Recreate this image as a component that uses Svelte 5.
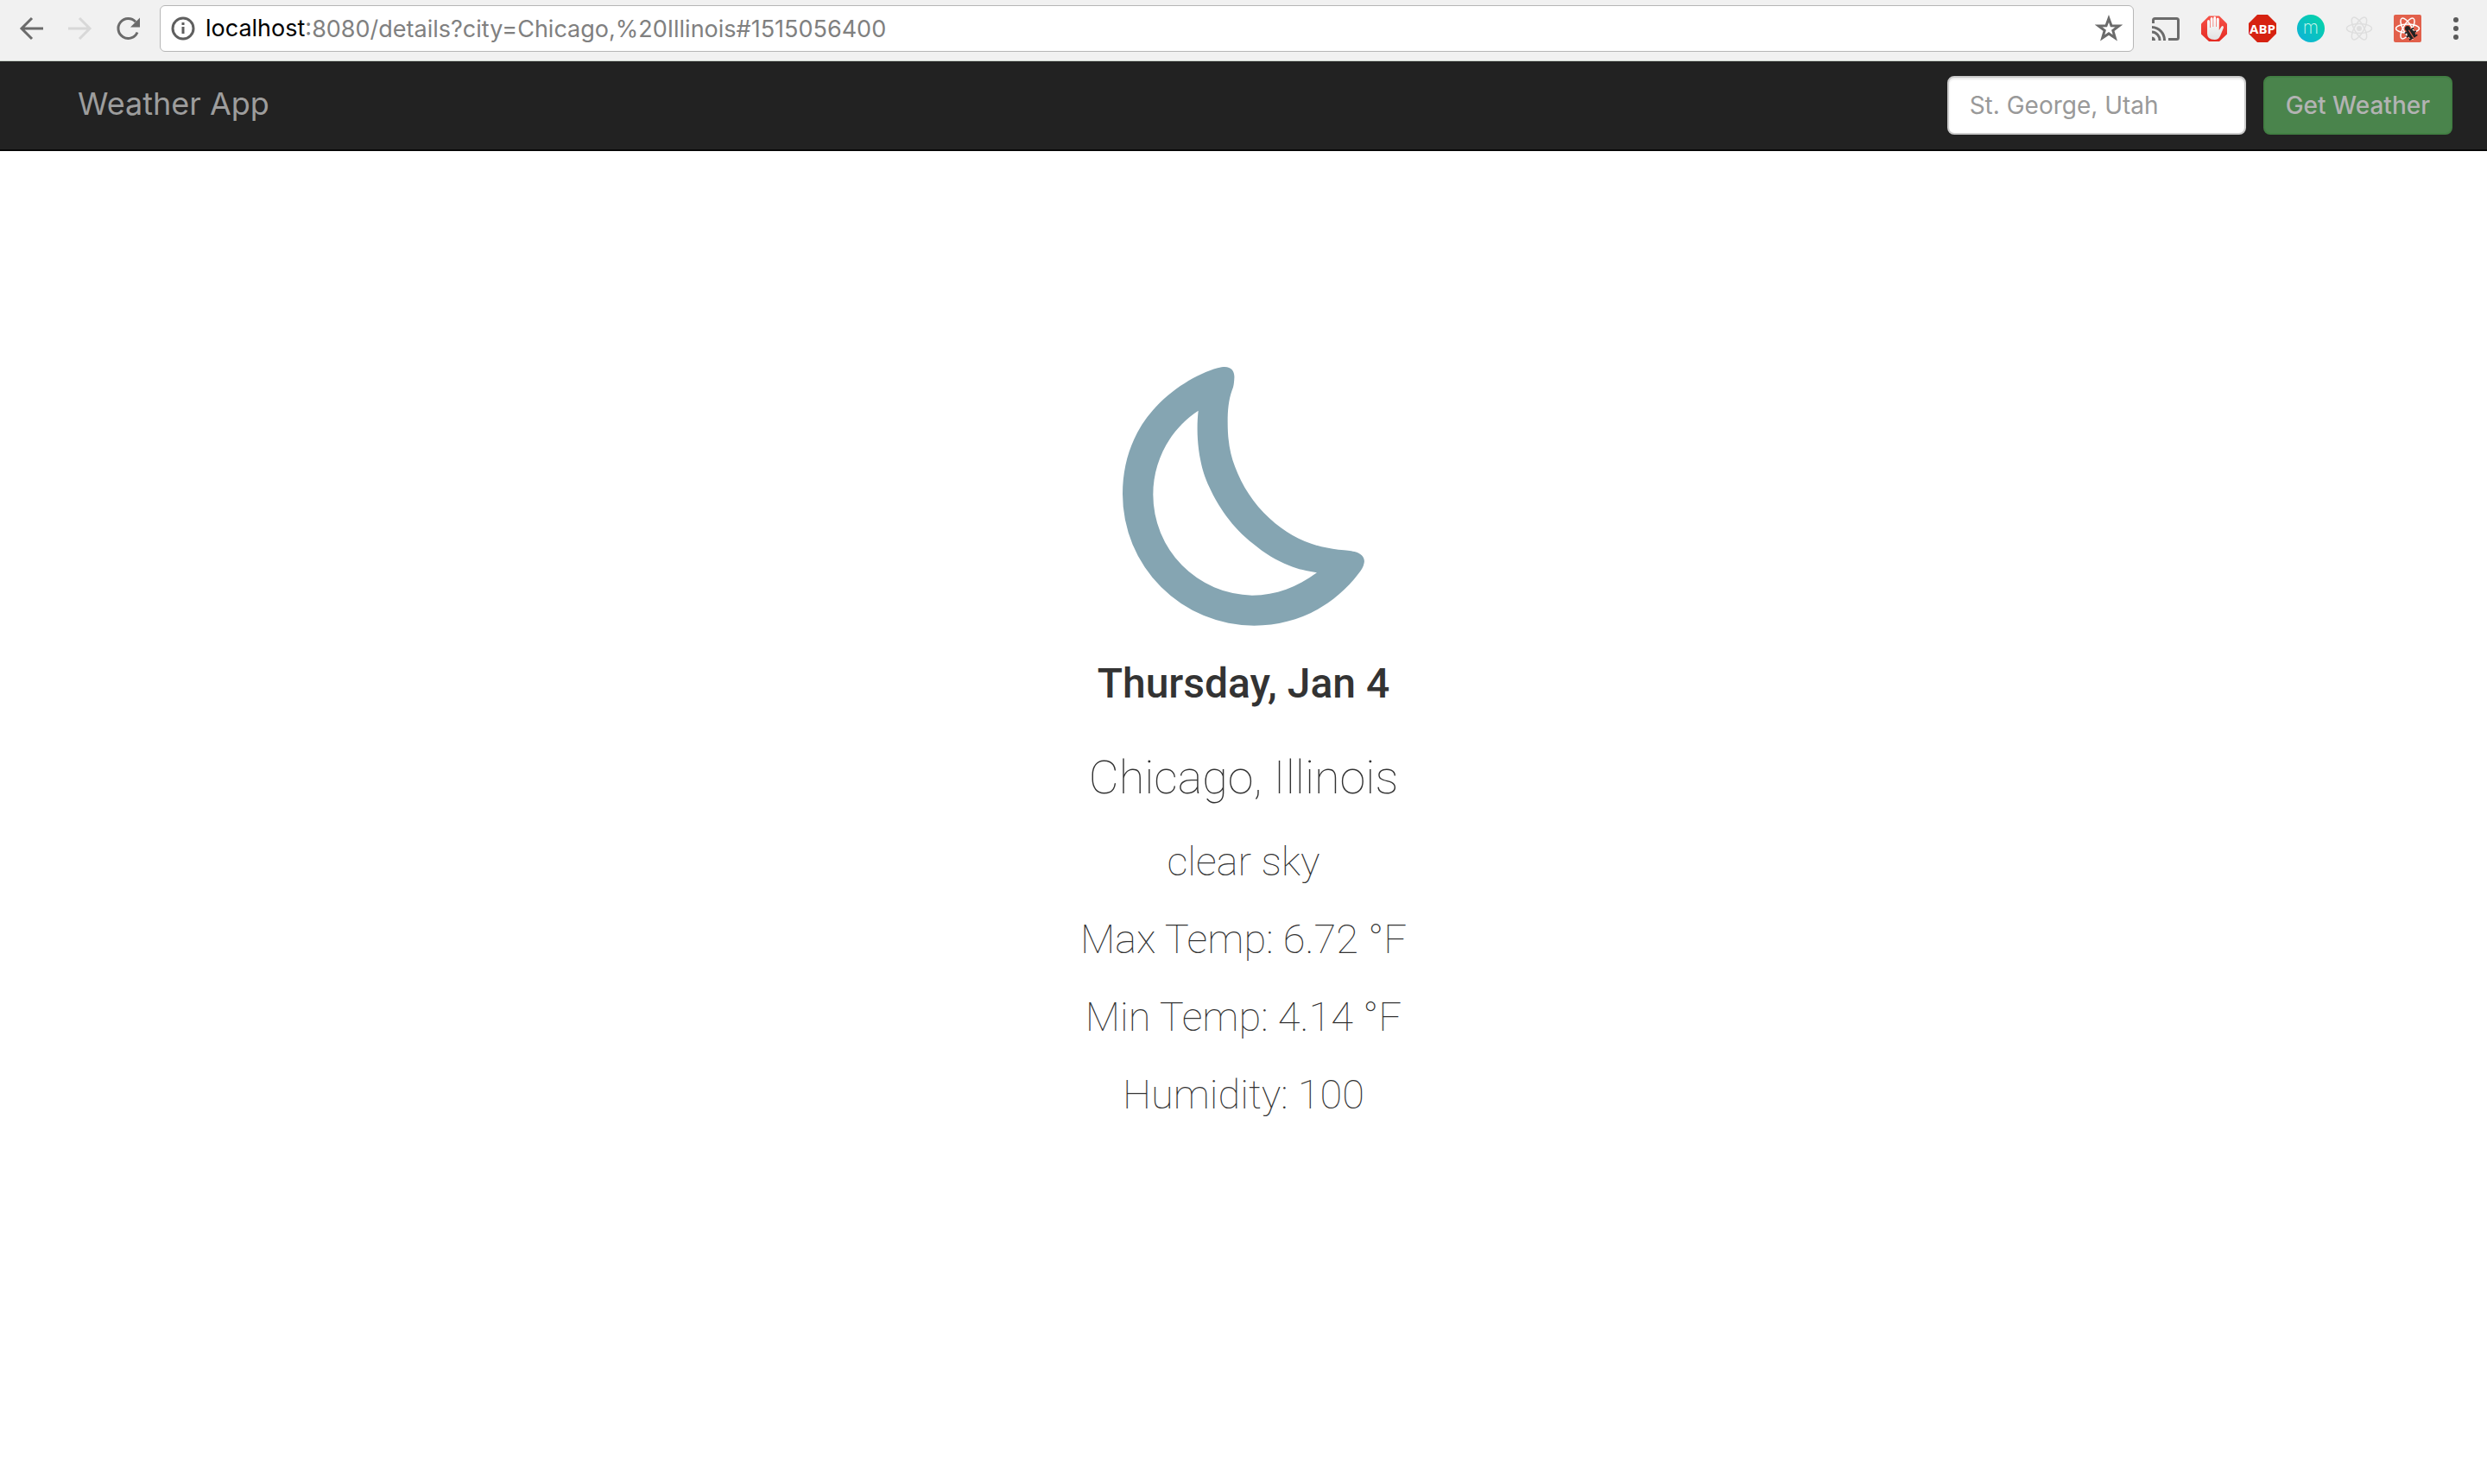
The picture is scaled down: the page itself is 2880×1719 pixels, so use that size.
<script>
  let path = $state(':8080/details?city=Chicago,%20Illinois#1515056400');
  let city = $state('');

  const forecast = {
    day: 'Thursday, Jan 4',
    city: 'Chicago, Illinois',
    rows: ['clear sky', 'Max Temp: 6.72 °F', 'Min Temp: 4.14 °F', 'Humidity: 100']
  };
  const orbits = [0, 60, 120];
</script>

<div class="toolbar">
  <div class="tools">
    <button class="icon" aria-label="Back">
      <svg viewBox="0 0 32 32" fill="none" stroke="#6b6b6b" stroke-width="3">
        <path d="M30 16H5M17 4 5 16l12 12" />
      </svg>
    </button>
    <button class="icon" aria-label="Forward" disabled>
      <svg viewBox="0 0 32 32" fill="none" stroke="#d8d8d8" stroke-width="3">
        <path d="M3 16h25M16 4l12 12-12 12" />
      </svg>
    </button>
    <button class="icon" aria-label="Reload">
      <svg viewBox="0 0 32 32">
        <path d="M27 20.500A11.500 11.500 0 1 1 25 8.300" fill="none" stroke="#6b6b6b" stroke-width="3" />
        <path d="M30 3.500v11H19z" fill="#6b6b6b" />
      </svg>
    </button>
  </div>

  <form class="omnibox">
    <svg class="info" viewBox="0 0 28 28">
      <circle cx="14" cy="14" r="12" fill="none" stroke="#5f5f5f" stroke-width="3" />
      <path d="M14 7v3M14 12v8" stroke="#5f5f5f" stroke-width="3" />
    </svg>
    <label for="url">localhost</label>
    <input id="url" type="text" bind:value={path} />
    <button class="icon" type="button" aria-label="Bookmark this page">
      <svg viewBox="0 0 32 32">
        <path d="M16 4.500l3 8.300 8.800.2-7 5.400 2.500 8.500-7.300-5-7.300 5 2.500-8.500-7-5.400 8.800-.2z" fill="none" stroke="#6b6b6b" stroke-width="3" />
      </svg>
    </button>
  </form>

  <div class="tools">
    <button class="icon" aria-label="Cast">
      <svg viewBox="0 0 32 32" fill="none" stroke="#6b6b6b" stroke-width="3">
        <path d="M1.500 10V6.500q0-2 2-2h25q2 0 2 2v20q0 2-2 2H19" />
        <path d="M0 14.500a15 15 0 0 1 14.500 15.500M0 20a9.500 9.500 0 0 1 9 10" />
        <path d="M0 25.500a4.500 4.500 0 0 1 4 4.500H0z" fill="#6b6b6b" stroke="none" />
      </svg>
    </button>
    <button class="icon" aria-label="AdBlock">
      <svg viewBox="0 0 32 32">
        <linearGradient id="hand" x2="0" y2="1"><stop offset="0" stop-color="#fff" /><stop offset="1" stop-color="#e2e2e2" /></linearGradient>
        <linearGradient id="stop" x2="0" y2="1"><stop offset="0" stop-color="#f65349" /><stop offset="1" stop-color="#e52a22" /></linearGradient>
        <path d="M10 1.500h12l9 9v12l-9 8.500H10l-9-8.500v-12z" fill="url(#stop)" />
        <path d="M8 8q0-2 1.500-2T11 8v7h.600V5q0-2 1.500-2t1.500 2v9h.600V4q0-2 1.500-2t1.500 2v10h.600V5.500q0-2 1.500-2t1.500 2V18l2.500-4q1.300-1.500 2.300-.5.700 1 0 2.500l-3.500 8.500q-2 4.500-6.500 4.500Q8 29 8 22z" fill="url(#hand)" />
      </svg>
    </button>
    <button class="icon" aria-label="Adblock Plus">
      <svg viewBox="0 0 32 32">
        <path d="M10 0h12l10 10v12L22 32H10L0 22V10z" fill="#d62211" />
        <text x="16" y="22" class="abp">ABP</text>
      </svg>
    </button>
    <button class="icon" aria-label="Momentum">
      <svg viewBox="0 0 32 32">
        <linearGradient id="teal" x1="1" y1="0" x2="0" y2="1"><stop offset="0" stop-color="#05d6a3" /><stop offset="1" stop-color="#0fb0dc" /></linearGradient>
        <circle cx="16" cy="16" r="16" fill="url(#teal)" />
        <text x="16" y="22" class="m">m</text>
      </svg>
    </button>
    <button class="icon" aria-label="React Developer Tools">
      <svg viewBox="0 0 32 32" fill="none" stroke="#dedede" stroke-width="1.500">
        {#each orbits as angle}
          <ellipse cx="16" cy="16" rx="14.500" ry="5.500" transform="rotate({angle} 16 16)" />
        {/each}
        <circle cx="16" cy="16" r="3" fill="#dedede" stroke="none" />
      </svg>
    </button>
    <button class="icon" aria-label="React debug build">
      <svg viewBox="0 0 32 32">
        <rect width="32" height="32" rx="2" fill="#e2604b" />
        <g fill="none" stroke="#fff" stroke-width="1.500">
          {#each orbits as angle}
            <ellipse cx="16" cy="16" rx="13.500" ry="5" transform="rotate({angle} 16 16)" />
          {/each}
        </g>
        <circle cx="16" cy="16" r="3" fill="#222" />
        <g transform="rotate(-32 20 22)">
          <path d="M14 18h12M13.500 22.500h13M14.500 27h11" stroke="#222" stroke-width="1.800" />
          <ellipse cx="20" cy="22.500" rx="4.500" ry="6" fill="#222" />
          <path d="M20 17v12" stroke="#e2604b" stroke-width="1.200" />
        </g>
      </svg>
    </button>
    <button class="icon" aria-label="Menu">
      <svg viewBox="0 0 32 32" fill="#5a5a5a">
        <circle cx="16" cy="6" r="3" /><circle cx="16" cy="16" r="3" /><circle cx="16" cy="26" r="3" />
      </svg>
    </button>
  </div>
</div>

<nav class="navbar">
  <a class="brand" href="#home">Weather App</a>
  <form class="search">
    <input type="text" aria-label="City" placeholder="St. George, Utah" bind:value={city} />
    <button type="button">Get Weather</button>
  </form>
</nav>

<main>
  <svg class="moon" viewBox="60 44 840 900" role="img" aria-label="Clear night">
    <path fill="#85a5b2" fill-rule="evenodd" d="M415 44C440 44 450 62 448 84C447 102 446 112 440 126C428 160 425 195 425 235C425 300 433 345 450 390C475 457 515 520 570 570C640 635 720 670 810 679C840 682 850 682 866 686C890 692 903 708 899 725C897 738 890 750 880 762C790 880 660 943 517 943A457 457 0 0 1 60 486C60 375 95 275 165 195C230 120 320 68 390 48C400 45 408 44 415 44ZM323 196C225 260 166 370 166 488A350 350 0 0 0 510 838C595 838 665 810 735 759C700 753 670 748 640 735C590 715 553 692 515 660C475 628 448 600 420 562C395 527 378 498 362 463C345 427 337 400 331 370C319 315 317 250 323 196Z" />
  </svg>
  <h2>{forecast.day}</h2>
  <p class="city">{forecast.city}</p>
  {#each forecast.rows as row}
    <p>{row}</p>
  {/each}
</main>

<style>
  :global(body) {
    background: #fff;
    font-family: Inter, sans-serif;
  }
  button,
  input {
    box-sizing: border-box;
    font-family: inherit;
  }
  .toolbar {
    display: flex;
    align-items: center;
    gap: 21px;
    padding: 6px 20px 10px;
    background: #f1f1f1;
    border-bottom: 1px solid #ccd3cc;
  }
  .tools {
    display: flex;
    gap: 24px;
  }
  .icon {
    flex: none;
    width: 32px;
    height: 32px;
    padding: 0;
    border: 0;
    background: none;
  }
  .icon svg {
    display: block;
    width: 100%;
    height: 100%;
  }
  .omnibox {
    display: flex;
    flex: 1;
    align-items: center;
    min-width: 0;
    padding: 0 12px;
    background: #fff;
    border: 1px solid #b6b6b6;
    border-radius: 6px;
    font-size: 27px;
  }
  .info {
    flex: none;
    width: 28px;
    margin-right: 12px;
  }
  .omnibox label {
    color: #000;
    line-height: 52px;
  }
  .omnibox input {
    flex: 1;
    min-width: 0;
    height: 52px;
    padding: 0;
    border: 0;
    background: none;
    color: #808080;
    font-size: 27px;
    outline: 0;
  }
  .abp {
    fill: #fff;
    font: 700 15px 'Open Sans', sans-serif;
    text-anchor: middle;
  }
  .m {
    fill: #c9f5ee;
    font: 200 21px Inter, sans-serif;
    text-anchor: middle;
  }
  .navbar {
    display: flex;
    align-items: flex-start;
    justify-content: space-between;
    padding: 17px 40px 17px 90px;
    background: #222;
    border-bottom: 2px solid #080808;
  }
  .brand {
    color: #9d9d9d;
    font-size: 36px;
    line-height: 64px;
    text-decoration: none;
  }
  .search {
    display: flex;
    gap: 20px;
  }
  .search input,
  .search button {
    height: 68px;
    border-radius: 8px;
    font-size: 28px;
  }
  .search input {
    width: 346px;
    padding: 0 24px;
    border: 2px solid #ccc;
    background: #fff;
    box-shadow: inset 0 2px 2px rgba(0, 0, 0, 0.075);
    color: #555;
  }
  .search input::placeholder {
    color: #999;
    opacity: 1;
  }
  .search button {
    padding: 0 24px;
    border: 2px solid #427f43;
    background: #4a844c;
    color: #b3b3b3;
    font-weight: 500;
  }
  main {
    display: flex;
    flex-direction: column;
    align-items: center;
    padding: 250px 20px 100px;
    color: #333;
    font-family: Roboto, sans-serif;
    text-align: center;
  }
  .moon {
    width: 280px;
    height: 300px;
  }
  h2 {
    margin: 37px 0 27px;
    font-size: 48px;
    font-weight: 500;
    line-height: 60px;
  }
  p {
    margin: 0;
    font-size: 47px;
    font-weight: 140;
    line-height: 90px;
  }
  .city {
    font-size: 54px;
    line-height: 104px;
  }
</style>
